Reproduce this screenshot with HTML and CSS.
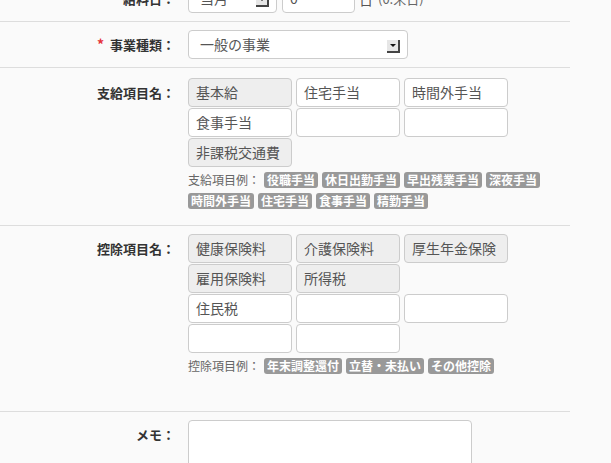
FILE: index.html
```html
<!DOCTYPE html>
<html>
<head>
	<title>給与設定</title>
	<link rel="stylesheet" href="styles.css">
</head>
<body>
	<div class="form">

		<div class="row row-top">
			<div class="label">給料日：</div>
			<div class="field inline">
				<div class="select select-small">当月<i class="arrow"></i></div>
				<div class="input input-small">0</div>
				<span class="unit">日</span>
				<span class="hint">(0:末日)</span>
			</div>
		</div>

		<div class="row">
			<div class="label"><span class="req">*</span> 事業種類：</div>
			<div class="field">
				<div class="select select-wide">一般の事業<i class="arrow"></i></div>
			</div>
		</div>

		<div class="row row-pay">
			<div class="label">支給項目名：</div>
			<div class="field">
				<div class="grid">
					<div class="input fixed">基本給</div>
					<div class="input">住宅手当</div>
					<div class="input">時間外手当</div>
					<div class="input">食事手当</div>
					<div class="input"></div>
					<div class="input"></div>
					<div class="input fixed">非課税交通費</div>
				</div>
				<div class="examples">
					<span class="ex-label">支給項目例：</span>
					<span class="tag">役職手当</span>
					<span class="tag">休日出勤手当</span>
					<span class="tag">早出残業手当</span>
					<span class="tag">深夜手当</span>
					<span class="tag">時間外手当</span>
					<span class="tag">住宅手当</span>
					<span class="tag">食事手当</span>
					<span class="tag">精勤手当</span>
				</div>
			</div>
		</div>

		<div class="row row-deduct">
			<div class="label">控除項目名：</div>
			<div class="field">
				<div class="grid">
					<div class="input fixed">健康保険料</div>
					<div class="input fixed">介護保険料</div>
					<div class="input fixed">厚生年金保険</div>
					<div class="input fixed">雇用保険料</div>
					<div class="input fixed">所得税</div>
					<div class="blank"></div>
					<div class="input">住民税</div>
					<div class="input"></div>
					<div class="input"></div>
					<div class="input"></div>
					<div class="input"></div>
				</div>
				<div class="examples">
					<span class="ex-label">控除項目例：</span>
					<span class="tag">年末調整還付</span>
					<span class="tag">立替・未払い</span>
					<span class="tag">その他控除</span>
				</div>
			</div>
		</div>

		<div class="row row-memo">
			<div class="label">メモ：</div>
			<div class="field">
				<div class="textarea"></div>
			</div>
		</div>

	</div>
</body>
</html>
```

FILE: styles.css
```css
body {
	margin: 0;
	padding: 0;
	background-color: #fafafa;
	font-family: "Noto Sans CJK JP", sans-serif;
	color: #333;
}

.form {
	width: 570px;
	margin-top: -24px;
}

.row {
	display: flex;
	padding: 8px 0;
	border-bottom: 1px solid #ddd;
}

.label {
	width: 175px;
	margin-right: 13px;
	flex-shrink: 0;
	text-align: right;
	font-size: 13px;
	font-weight: bold;
	line-height: 29px;
	color: #333;
}

.req {
	color: #e5323a;
	font-size: 14px;
	margin-right: 3px;
}

.field {
	flex: 1;
}

.inline {
	display: flex;
	align-items: center;
}

/* boxes */
.input,
.select {
	position: relative;
	box-sizing: border-box;
	height: 29px;
	line-height: 27px;
	padding-left: 7px;
	border: 1px solid #ccc;
	border-radius: 4px;
	background-color: #fff;
	font-size: 14px;
	color: #555;
	white-space: nowrap;
}

.input.fixed {
	background-color: #eee;
}

.select {
	padding-left: 11px;
}

.select-small {
	width: 89px;
}

.input-small {
	width: 73px;
	margin-left: 5px;
}

.select-wide {
	width: 220px;
}

.arrow {
	position: absolute;
	right: 7px;
	top: 9px;
	width: 13px;
	height: 13px;
	background-color: #e6e6e6;
	border-right: 2px solid #444;
	border-bottom: 2px solid #444;
	box-sizing: border-box;
}

.arrow::after {
	content: "";
	position: absolute;
	left: 3px;
	top: 4px;
	border-left: 3px solid transparent;
	border-right: 3px solid transparent;
	border-top: 3px solid #111;
}

.unit {
	margin-left: 4px;
	font-size: 14px;
	color: #555;
}

.hint {
	margin-left: 5px;
	font-size: 13px;
	color: #666;
}

.grid {
	display: grid;
	grid-template-columns: 104px 104px 104px;
	grid-auto-rows: 29px;
	column-gap: 4px;
	row-gap: 1px;
}

.row-pay {
	padding-top: 10px;
	padding-bottom: 16px;
}

.row-deduct {
	padding-bottom: 37px;
}

/* examples */
.examples {
	display: flex;
	flex-wrap: wrap;
	align-items: center;
	gap: 5px 4px;
	margin-top: 5px;
}

.ex-label {
	font-size: 12px;
	line-height: 16px;
	color: #666;
}

.tag {
	display: inline-block;
	padding: 0 3px;
	border-radius: 3px;
	background-color: #999;
	color: #fff;
	font-size: 12px;
	font-weight: bold;
	line-height: 16px;
}

.textarea {
	box-sizing: border-box;
	width: 284px;
	height: 70px;
	border: 1px solid #ccc;
	border-radius: 4px;
	background-color: #fff;
}
```
